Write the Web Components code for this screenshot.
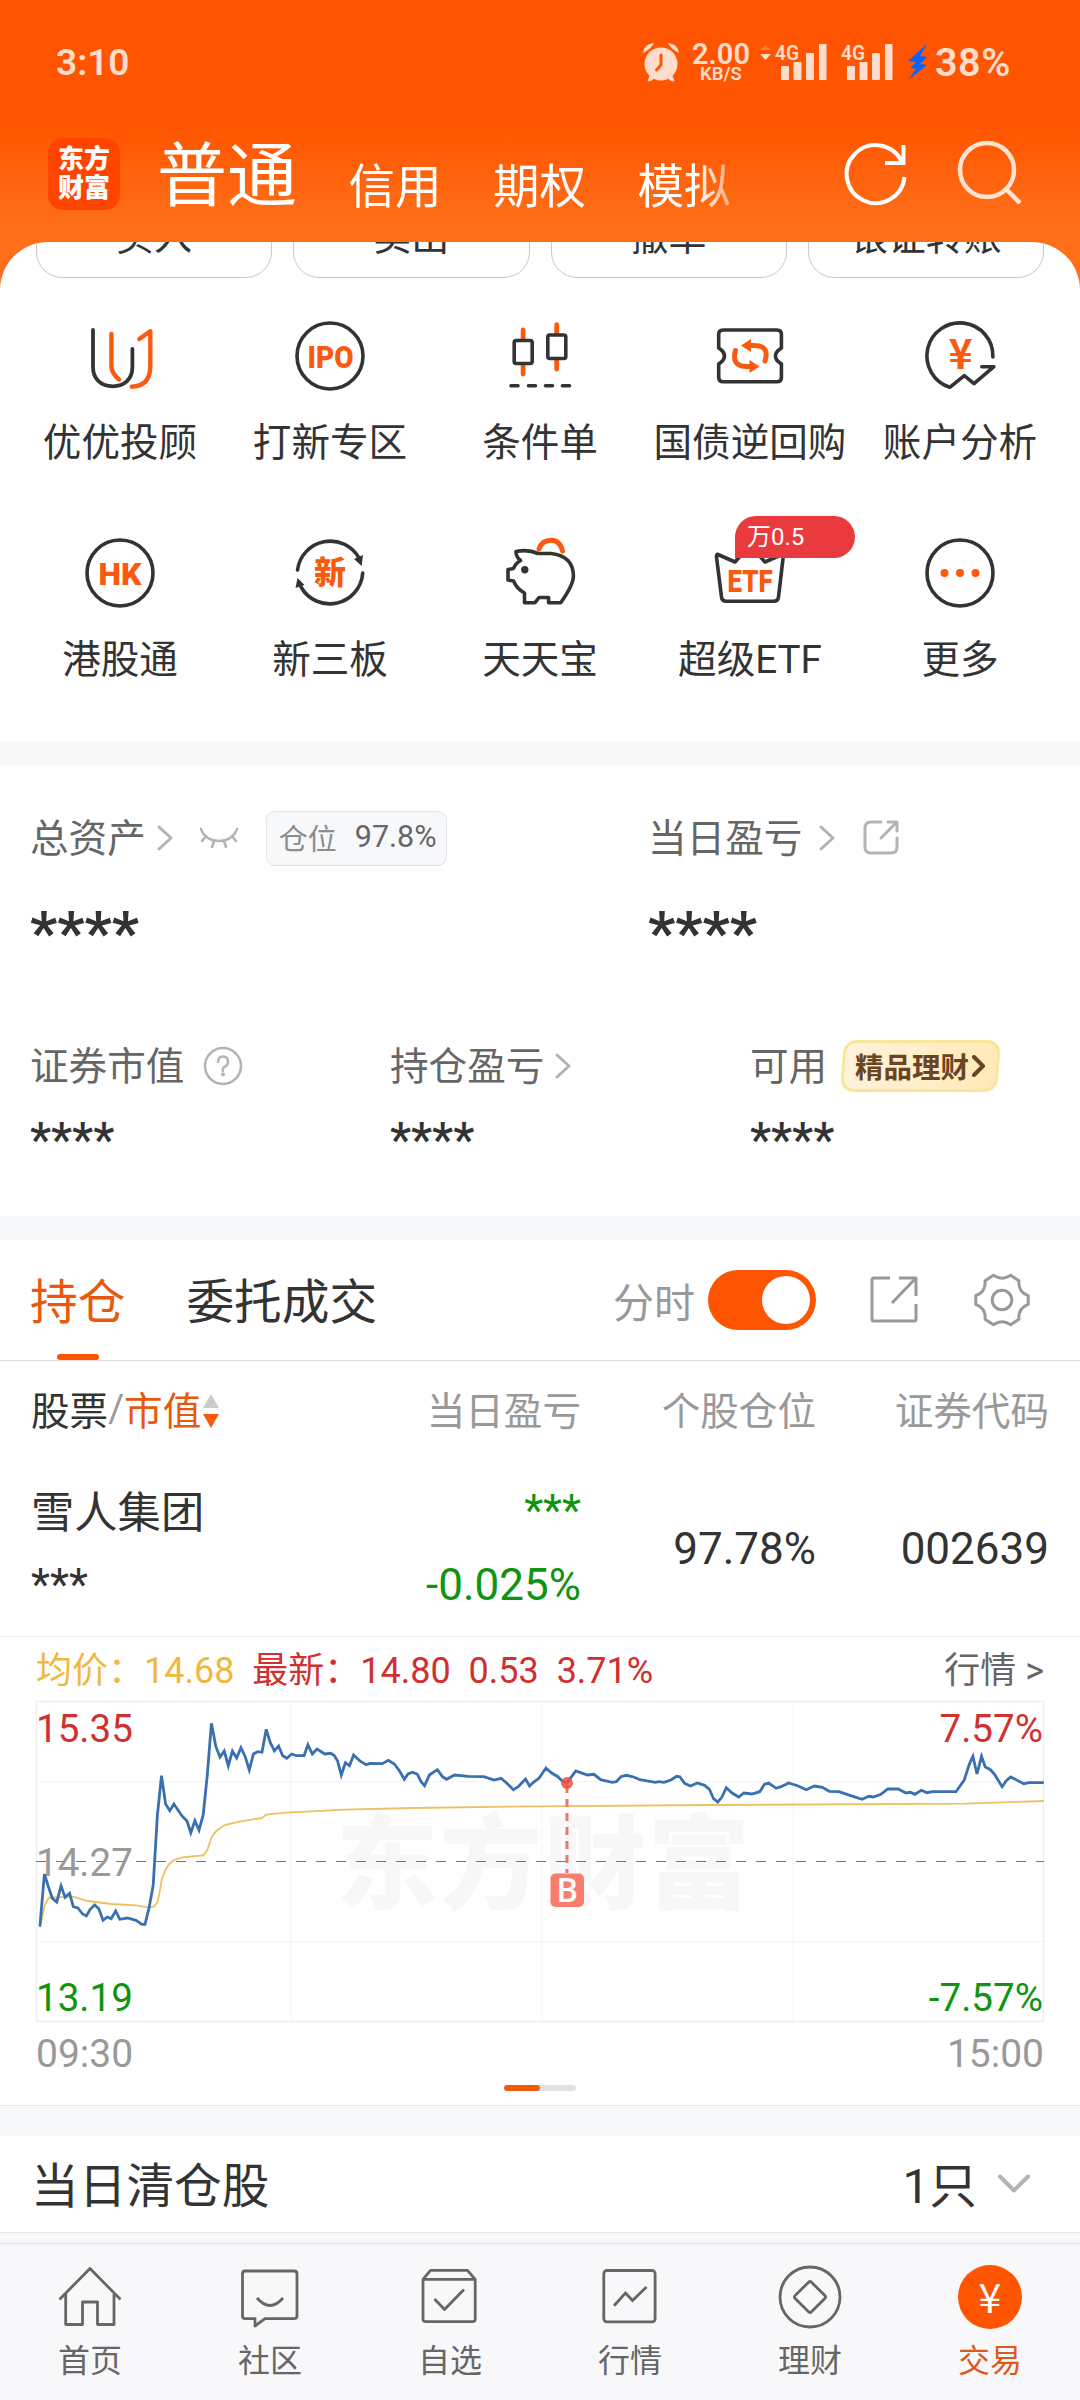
<!DOCTYPE html>
<html lang="zh-CN">
<head>
<meta charset="utf-8">
<title>交易</title>
<style>
  :root {
    --brand: #ff5500;
    --brand-text: #e8590c;
    --text: #333;
    --text-2: #666;
    --text-3: #999;
    --down: #109410;
    --up: #d03030;
    --gap-bg: #f7f8fa;
  }
  body {
    margin: 0;
    width: 1080px;
    height: 2400px;
    overflow: hidden;
    background: #fff;
    color: var(--text);
    font-family: Roboto, "Noto Sans CJK SC", sans-serif;
  }
</style>
</head>
<body>
<trade-page></trade-page>

<script>
// Base class: stamps the static css/html into an open shadow root
class BaseElement extends HTMLElement {
  constructor() {
    super();
    this.attachShadow({ mode: "open" });
  }

  connectedCallback() {
    this.shadowRoot.innerHTML = `<style>${this.constructor.css || ""}</style>${this.html()}`;
  }

  html() {
    return "<slot></slot>";
  }
}

// Icons, keyed by name: [width, height, markup]
const ICONS = {
  refresh: [68, 68, `<g fill="none" stroke="#fff" stroke-width="4"><path d="M59.500 21A29 29 0 1 0 62.500 37"/><path d="M61.500 5V23H43"/></g>`],
  search: [68, 68, `<g fill="none" stroke="#ffe3d0" stroke-width="4.500"><circle cx="31" cy="30" r="27"/><path d="M50 49L64 63"/></g>`],
  alarm: [38, 40, `<g fill="#ffdccb"><circle cx="19" cy="22" r="16.500"/><path d="M1 11Q2 2 12 1Q9 7 1 11ZM37 11Q36 2 26 1Q29 7 37 11Z"/><path d="M8 34l-2 5 4-1 2-3zM30 34l2 5-4-1-2-3z" stroke="#ffdccb"/></g><path d="M19 13v10l-4.500 5" fill="none" stroke="#ff5500" stroke-width="3" stroke-linecap="round"/>`],
  bolt: [21, 38, `<path d="M20 1L1 18l8 1-6 6 6 1-8 11 19-15-7-1 7-7-7-1z" fill="#0a63ff"/>`],
  chevron: [16, 26, `<path d="M2 2L14 13 2 24" fill="none" stroke="#b3b3b3" stroke-width="3" stroke-linecap="round" stroke-linejoin="round"/>`],
  chevronDown: [34, 20, `<path d="M3 2.500L17 16.500 31 2.500" fill="none" stroke="#b3b3b3" stroke-width="4" stroke-linecap="round" stroke-linejoin="round"/>`],
  eyeClosed: [40, 22, `<g fill="none" stroke="#b3b3b3" stroke-width="2.500" stroke-linecap="round"><path d="M2 2C7 18 33 18 38 2M7 9l-4 5M33 9l4 5M15 14l-2 6M25 14l2 6"/></g>`],
  share: [36, 36, `<g fill="none" stroke="#b3b3b3" stroke-width="3" stroke-linecap="round" stroke-linejoin="round"><path d="M18 2H8Q2 2 2 8V27Q2 33 8 33H28Q34 33 34 27V18M25 2H34V11M34 2L18 18"/></g>`],
  shareBig: [48, 48, `<g fill="none" stroke="#999" stroke-width="3" stroke-linejoin="round"><path d="M20 2H4Q2 2 2 4V43Q2 45 4 45H44Q46 45 46 43V28M29 2H46V20M45 3L22 27"/></g>`],
  help: [40, 40, `<circle cx="20" cy="20" r="18" fill="none" stroke="#b3b3b3" stroke-width="2.500"/><path d="M15 16Q15 10.500 20 10.500T25 16Q25 19 22 20.500T20 25" fill="none" stroke="#b3b3b3" stroke-width="2.500" stroke-linecap="round"/><circle cx="20" cy="28.500" r="2" fill="#b3b3b3"/>`],
  gear: [56, 56, `<g fill="none" stroke="#999" stroke-width="3" stroke-linejoin="round"><path d="M19.400 3.300Q28 9 36.600 3.300L44.900 8.700Q44 20 54.200 23.700V32.300Q44 36 44.900 47.300L36.600 52.700Q28 47 19.400 52.700L11.100 47.300Q12 36 1.800 32.300V23.700Q12 20 11.100 8.700Z"/><circle cx="28" cy="28" r="9.800"/></g>`],

  // Quick entries, 72x72
  advisor: [72, 72, `<g fill="none" stroke-width="3.800" stroke-linecap="round" stroke-linejoin="round"><path stroke="#333" d="M9 10V47C9 59 17 66.300 28.800 66.300S48.400 59 48.400 47V29"/><path stroke="#fa5a0f" stroke-width="4.400" d="M27.400 14V46Q27.400 53 35 59.500M55.300 19L66.300 11.300V46Q66.300 66 47.700 66.700"/></g>`],
  ipo: [72, 72, `<circle cx="36" cy="36" r="33" fill="none" stroke="#333" stroke-width="3.600"/><text x="13.500" y="47.500" font-size="32" font-weight="900" fill="#fa5a0f" textLength="46" lengthAdjust="spacingAndGlyphs">IPO</text>`],
  candles: [72, 72, `<g fill="none" stroke="#fa5a0f" stroke-width="4.800" stroke-linecap="round"><path d="M19.100 10V20M19.100 44V54M52.700 4.700V14M52.700 39V49"/></g><g fill="#fff" stroke="#333" stroke-width="3.600"><rect x="10.200" y="20.500" width="18" height="23" rx="2"/><rect x="43.800" y="15" width="18" height="23.500" rx="2"/></g><path d="M7 65.700h7M24.500 65.700h7M41.500 65.700h7M58.500 65.700h7" stroke="#333" stroke-width="3.600" stroke-linecap="round"/>`],
  repo: [72, 72, `<path d="M9 10H63Q67.400 10 67.400 14.500V28C65 30 61.500 31 61.500 36S65 42 67.400 44V57.500Q67.400 61.700 63 61.700H9Q4.700 61.700 4.700 57.500V44C7 42 10.500 41 10.500 36S7 30 4.700 28V14.500Q4.700 10 9 10Z" fill="none" stroke="#333" stroke-width="3.600"/><g fill="none" stroke="#fa5a0f" stroke-width="5" stroke-linecap="round"><path d="M51 41Q56 25.500 40 25.500H35M21.500 30.500Q17 46.500 33 46.500H37"/></g><path d="M27 25.500L37 19V32ZM45.500 46.500L35.500 40V53Z" fill="#fa5a0f"/>`],
  analysis: [72, 72, `<path d="M68.900 37A33 33 0 1 0 25.800 67.300L40.300 55.700 50 63.700 69.900 46.700H57.800" fill="none" stroke="#333" stroke-width="3.600" stroke-linecap="round" stroke-linejoin="round"/><text x="36.500" y="49" font-size="41" font-weight="700" font-family="'Noto Sans CJK SC', sans-serif" text-anchor="middle" fill="#fa5a0f">¥</text>`],
  hk: [72, 72, `<circle cx="36" cy="36" r="33" fill="none" stroke="#333" stroke-width="3.600"/><text x="14.500" y="47.500" font-size="32" font-weight="900" fill="#fa5a0f" textLength="43" lengthAdjust="spacingAndGlyphs">HK</text>`],
  neeq: [72, 72, `<g fill="none" stroke="#333" stroke-width="3.600" stroke-linecap="round"><path d="M3.500 33A33 33 0 0 1 65 21M68.700 36A33 33 0 0 1 7 50"/></g><path d="M67.700 29L60 22l9-4zM3.500 41l-2 10 9-3z" fill="#333"/><text x="36" y="47" font-size="32" font-weight="900" text-anchor="middle" fill="#fa5a0f">新</text>`],
  piggy: [72, 72, `<path d="M35 12Q38 3.300 47 3.300T58.500 14" fill="none" stroke="#fa5a0f" stroke-width="5" stroke-linecap="round"/><path d="M12 14.500Q24 12 34 16.500H47Q69.400 19 69.400 39 69.400 48 56.700 65.700H44.600V60.500H35L31 65.700H20.500V56Q13 52 9.500 44L4 43V32.500L9.500 31.500Q11 27 16.500 23.500 12 20 12 14.500Z" fill="#fff" stroke="#333" stroke-width="3.600" stroke-linejoin="round"/><circle cx="20.800" cy="32.700" r="3.700" fill="#333"/>`],
  etf: [72, 72, `<path d="M4 17.500L21 25 36 8 51 25 68 17.500Q69.500 17.500 69.200 20L64.500 60Q64 64.300 59.500 64.300H12.500Q8 64.300 7.500 60L2.500 20Q2.300 17 4 17.500Z" fill="none" stroke="#333" stroke-width="3.600" stroke-linejoin="round"/><text x="13.500" y="54.500" font-size="32" font-weight="900" fill="#fa5a0f" textLength="45" lengthAdjust="spacingAndGlyphs">ETF</text>`],
  more: [72, 72, `<circle cx="36" cy="36" r="33" fill="none" stroke="#333" stroke-width="3.600"/><g fill="#fa5a0f"><circle cx="20.500" cy="36" r="4"/><circle cx="36" cy="36" r="4"/><circle cx="51.500" cy="36" r="4"/></g>`],

  // Bottom tabs, 64x64
  home: [64, 64, `<path d="M1.500 34.500L32 3.500 62.500 34.500M7.700 29V59.500H24.500V37H39.500V59.500H56V29" fill="none" stroke="#666" stroke-width="2.800" stroke-linejoin="round"/>`],
  community: [64, 64, `<path d="M7 6H56Q59 6 59 9V51Q59 53.700 56 53.700H27L17 61V53.700H7Q4.500 53.700 4.500 51V9Q4.500 6 7 6ZM19 33Q32 48 45 33" fill="none" stroke="#666" stroke-width="2.800" stroke-linejoin="round"/>`],
  favorites: [64, 64, `<path d="M5 14.300L12.500 5.300H49.500L57.200 14.300V54Q57.200 56.700 54.500 56.700H7.700Q5 56.700 5 54ZM5 14.300H57.200M16.500 34L26.500 44.500 46 24.500" fill="none" stroke="#666" stroke-width="2.800" stroke-linejoin="round"/>`],
  quotes: [64, 64, `<rect x="5.800" y="5.500" width="51.300" height="51.300" rx="3" fill="none" stroke="#666" stroke-width="2.800"/><path d="M16 40.700L27.500 28 34.500 35.500 48.500 22" fill="none" stroke="#666" stroke-width="2.800"/>`],
  wealth: [64, 64, `<circle cx="32" cy="32" r="30" fill="none" stroke="#666" stroke-width="2.800"/><rect x="20.500" y="20.500" width="23" height="23" rx="2" transform="rotate(45 32 32)" fill="none" stroke="#666" stroke-width="2.800"/>`],
  trade: [64, 64, `<circle cx="32" cy="32" r="32" fill="#ff5500"/><text x="32" y="48" font-size="41" font-family="'Noto Sans CJK SC', sans-serif" text-anchor="middle" fill="#fff">¥</text>`],
};

class AppIcon extends BaseElement {
  static css = ":host { display: block; flex: none; } svg { display: block; overflow: visible; }";

  html() {
    const [w, h, body] = ICONS[this.getAttribute("name")];
    return `<svg width="${w}" height="${h}" viewBox="0 0 ${w} ${h}">${body}</svg>`;
  }
}
customElements.define("app-icon", AppIcon);

// System status bar
class StatusBar extends BaseElement {
  static css = `
    :host { display: flex; align-items: center; height: 124px; padding: 0 66px 0 56px; color: #ffdccb; font-weight: 600; }
    .time { flex: 1; font-size: 37px; }
    .speed { display: flex; flex-direction: column; align-items: center; width: 60px; margin-left: 11px; font-size: 29px; line-height: 24px; }
    .speed small { font-size: 18.500px; line-height: 17px; }
    .dir { margin: 0 4px 20px 9px; }
    .sig { margin-right: 13px; }
    .pct { width: 79px; margin-left: 7px; font-size: 39.500px; letter-spacing: 0.500px; white-space: nowrap; }
    svg { display: block; }
  `;

  signal() {
    return `<svg class="sig" width="53" height="38" viewBox="0 0 53 38" fill="#ffdccb">
      <text x="0" y="17" font-size="21" textLength="24" lengthAdjust="spacingAndGlyphs">4G</text>
      <rect x="6" y="23" width="8" height="14" rx="1"/><rect x="18.500" y="19" width="8" height="18" rx="1"/>
      <rect x="31" y="10" width="8" height="27" rx="1"/><rect x="44" y="1" width="7.500" height="36" rx="1"/>
    </svg>`;
  }

  html() {
    return `<span class="time">3:10</span>
      <app-icon name="alarm"></app-icon>
      <div class="speed"><span>2.00</span><small>KB/S</small></div>
      <svg class="dir" width="11" height="15" viewBox="0 0 11 15"><path d="M0 5L5.500 0 11 5z" fill="#ff7a3a"/><path d="M0 9L5.500 15 11 9z" fill="#ffdccb"/></svg>
      ${this.signal()}${this.signal()}
      <app-icon name="bolt"></app-icon>
      <span class="pct">38%</span>`;
  }
}
customElements.define("status-bar", StatusBar);

// Logo, account type tabs and header actions
class AccountHeader extends BaseElement {
  static css = `
    :host { display: flex; align-items: center; height: 100px; padding: 0 56px 18px 48px; color: #fff; }
    .logo { box-sizing: border-box; width: 72px; height: 72px; padding-top: 7px; border-radius: 15px; background: #ff4400;
      text-align: center; font-size: 26px; font-weight: 900; line-height: 29px; }
    nav { display: flex; align-items: center; gap: 51.500px; flex: 1; margin-left: 37px;
      -webkit-mask-image: linear-gradient(90deg, #000 540px, transparent 600px); mask-image: linear-gradient(90deg, #000 540px, transparent 600px); }
    span { padding-top: 25px; font-size: 46.500px; line-height: 56px; white-space: nowrap; }
    .on { padding: 6px 0 0; font-size: 70px; line-height: 80px; }
    .tools { display: flex; gap: 46px; }
  `;

  html() {
    return `<div class="logo">东方<br>财富</div>
      <nav><span class="on">普通</span><span>信用</span><span>期权</span><span>模拟</span></nav>
      <div class="tools"><app-icon name="refresh"></app-icon><app-icon name="search"></app-icon></div>`;
  }
}
customElements.define("account-header", AccountHeader);

class ActionButton extends BaseElement {
  static css = `
    :host { box-sizing: border-box; flex: 1; height: 80px; border: 1px solid #c8c8c8; border-radius: 26px;
      text-align: center; font-size: 38px; line-height: 77px; }
  `;
}
customElements.define("action-button", ActionButton);

class QuickEntry extends BaseElement {
  static css = `
    :host { display: flex; flex-direction: column; align-items: center; height: 146px; }
    .icon { position: relative; margin-bottom: 27px; }
    .label { font-size: 38.600px; line-height: 48px; white-space: nowrap; }
    .tag { position: absolute; left: 21px; top: -21px; box-sizing: border-box; width: 120px; height: 42px; padding-left: 12px;
      border-radius: 21px 21px 21px 0; background: #e93b3d; color: #fff; font-size: 24px; line-height: 42px; }
  `;

  html() {
    const tag = this.getAttribute("tag");
    return `<div class="icon"><app-icon name="${this.getAttribute("icon")}"></app-icon>${tag ? `<div class="tag">${tag}</div>` : ""}</div>
      <div class="label"><slot></slot></div>`;
  }
}
customElements.define("quick-entry", QuickEntry);

// One figure of the asset overview; extras go next to its label
class AssetItem extends BaseElement {
  static css = `
    :host { display: block; }
    .head { display: flex; align-items: center; height: 56px; color: var(--text-2); font-size: 38.600px; white-space: nowrap; }
    .head span { padding-bottom: 6px; }
    .value { margin-top: 18px; font-size: 47.500px; font-weight: 500; line-height: 56px; }
    :host([big]) .value { margin-top: 31px; font-size: 60px; font-weight: 700; line-height: 72px; }
  `;

  html() {
    return `<div class="head"><span>${this.getAttribute("label")}</span><slot></slot></div><div class="value">****</div>`;
  }
}
customElements.define("asset-item", AssetItem);

class AssetOverview extends BaseElement {
  static css = `
    :host { display: block; box-sizing: border-box; height: 450px; padding: 44px 30px 0; }
    .row { display: grid; }
    .top { grid-template-columns: 618px 1fr; height: 228px; }
    .bottom { grid-template-columns: 360px 360px 1fr; }
    .position { display: flex; align-items: center; box-sizing: border-box; width: 181px; height: 55px; margin-left: 27px; padding: 0 0 3px 12px;
      border: 1px solid #e2e3e6; border-radius: 9px; background: #f7f8fa; font-size: 29px; color: #8c8c8c; }
    .position b { margin-left: 18px; font-size: 30.500px; font-weight: 400; color: var(--text-2); }
    .promo { display: flex; align-items: center; box-sizing: border-box; width: 157px; height: 52px; margin-left: 15px; padding-left: 10px;
      border: 3px solid #f8e69c; border-radius: 13px; background: linear-gradient(100deg, #fff3dc, #ffe9b5); transform: skewX(-4deg);
      color: #6b4423; font-size: 28.500px; font-weight: 700; }
    .promo svg { margin-left: 3px; transform: skewX(4deg); }
    .promo span { transform: skewX(4deg); padding: 0 0 2px; }
  `;

  html() {
    return `<div class="row top">
        <asset-item big label="总资产">
          <app-icon name="chevron" style="margin-left: 11px"></app-icon>
          <app-icon name="eyeClosed" style="margin-left: 26px"></app-icon>
          <div class="position">仓位<b>97.8%</b></div>
        </asset-item>
        <asset-item big label="当日盈亏">
          <app-icon name="chevron" style="margin-left: 17px"></app-icon>
          <app-icon name="share" style="margin-left: 28px"></app-icon>
        </asset-item>
      </div>
      <div class="row bottom">
        <asset-item label="证券市值"><app-icon name="help" style="margin-left: 19px"></app-icon></asset-item>
        <asset-item label="持仓盈亏"><app-icon name="chevron" style="margin-left: 11px"></app-icon></asset-item>
        <asset-item label="可用">
          <div class="promo"><span>精品理财</span><svg width="14" height="22" viewBox="0 0 14 22"><path d="M2 2L11 11 2 20" fill="none" stroke="#6b4423" stroke-width="4" stroke-linecap="round" stroke-linejoin="round"/></svg></div>
        </asset-item>
      </div>`;
  }
}
customElements.define("asset-overview", AssetOverview);

class SectionGap extends BaseElement {
  static css = ":host { display: block; height: 24px; background: var(--gap-bg); }";
}
customElements.define("section-gap", SectionGap);

class ToggleSwitch extends BaseElement {
  static css = `
    :host { display: flex; justify-content: flex-end; box-sizing: border-box; width: 108px; height: 60px; padding: 6px; border-radius: 30px; background: var(--brand); }
    i { width: 48px; height: 48px; border-radius: 50%; background: #fff; }
  `;

  html() {
    return "<i></i>";
  }
}
customElements.define("toggle-switch", ToggleSwitch);

class HoldingTabs extends BaseElement {
  static css = `
    :host { display: flex; align-items: center; box-sizing: border-box; height: 121px; padding: 0 50px 0 30px; border-bottom: 1px solid #dcdcdc; font-size: 47.700px; }
    .tab { display: flex; flex-direction: column; align-items: center; justify-content: flex-end; height: 120px; line-height: 56px; }
    .tab::after { content: ""; width: 42px; height: 6px; margin-top: 23px; border-radius: 3px; }
    .on { color: var(--brand-text); margin-right: 61px; }
    .on::after { background: var(--brand); }
    .mode { margin-left: auto; margin-right: 13px; color: var(--text-3); font-size: 41px; }
  `;

  html() {
    return `<span class="tab on">持仓</span><span class="tab">委托成交</span>
      <span class="mode">分时</span><toggle-switch></toggle-switch>
      <app-icon name="shareBig" style="margin-left: 54px"></app-icon>
      <app-icon name="gear" style="margin-left: 56px"></app-icon>`;
  }
}
customElements.define("holding-tabs", HoldingTabs);

class HoldingTable extends BaseElement {
  static css = `
    :host { display: block; height: 276px; box-sizing: border-box; border-bottom: 1px solid #f0f0f0; }
    .row { display: grid; grid-template-columns: 300px 1fr 235px 233px; padding: 0 31px; align-items: center; text-align: right; }
    .row > :first-child { text-align: left; }
    .head { height: 94px; padding-bottom: 6px; font-size: 38.600px; color: var(--text-3); }
    .sort { display: flex; align-items: center; }
    .sort b { font-weight: 400; color: var(--text); }
    .sort em { font-style: normal; color: var(--brand-text); }
    .stock { height: 175px; font-size: 44px; }
    .cell { display: flex; flex-direction: column; }
    .name { font-size: 43.300px; line-height: 60px; margin-top: 2px; }
    .mask { line-height: 60px; margin-top: 11px; }
    .down { color: var(--down); margin-top: -4px; }
    .down .mask { margin: 0; line-height: 56px; }
    .down .rate { line-height: 52px; margin-top: 20px; }
  `;

  html() {
    return `<div class="row head">
        <div class="sort"><b>股票</b>/<em>市值</em>
          <svg width="18" height="36" viewBox="0 0 18 36" style="margin: 5px 0 0 1px"><path d="M1 15L9 1 17 15z" fill="#ccc"/><path d="M1 21L9 35 17 21z" fill="#fa5a0f"/></svg>
        </div>
        <span>当日盈亏</span><span>个股仓位</span><span>证券代码</span>
      </div>
      <div class="row stock">
        <div class="cell"><span class="name">雪人集团</span><span class="mask">***</span></div>
        <div class="cell down"><span class="mask">***</span><span class="rate">-0.025%</span></div>
        <span>97.78%</span><span>002639</span>
      </div>`;
  }
}
customElements.define("holding-table", HoldingTable);

const PRICE_LINE = "3.9,225.7 8.4,173 12.6,186.3 16.3,197.3 20.8,201 25,185 29.1,196.3 33.6,192.3 37.3,205.7 41.8,207 46.6,213 50.4,215 54.2,208.3 58.7,204 62.8,207.7 67,219.3 71.4,216 75.2,217.7 79.7,210 83.8,218.3 91.4,217 100,219.3 105.9,223.3 109,223.3 113.1,206.7 117.2,184 121.4,114 125.5,74.7 129.6,103 133.8,109.7 137.9,103 145.8,114.7 151,120 154.8,131.7 158.9,119.7 163,129 167.2,114 171.3,74 175.4,22.3 179.9,45.7 184,56 188.2,50 192.3,64.7 196.4,50 200.6,57 205,46.7 209.2,55.7 213.3,69 217.4,53 221.6,50.7 226,51.3 230.2,28.3 234.3,41.7 238.4,49.7 242.6,45 246.7,54.7 250.8,57.3 255.7,53 260.1,54.7 268.1,54.7 271.9,43.7 276.3,53 281.1,48 288.7,53 294.6,52.3 298,54.3 301.5,59.7 305.3,74 309.4,61.7 313.5,64.7 317.6,54 323.9,60 330,63.7 334.2,62.3 346.2,62.7 352.4,59.3 358.3,63 363.4,69.7 368.3,78.3 372,73 376.5,71.3 381.4,73.3 385.1,80.7 388.6,84.7 393.4,74 401.3,68.7 406.5,75.7 410.6,78.3 418.5,74 432.3,75.3 447.8,75.7 458.1,79 465,77.3 470.9,82.3 477.4,88.7 482.3,85.7 489.5,78 493.6,85 497.7,81 502.9,77.3 504,75.7 509.9,67 516,72.3 521.9,75.7 526.4,80.3 530.9,81.7 535,76.3 539.8,70 551.5,74 558,73.3 564.6,78.7 576.3,81.3 580.4,80.7 584.9,75.7 590.1,74.3 597.7,76 603.9,78.7 619.4,81.3 622.8,80.7 628,81.3 634.9,79 640.7,75.3 643.8,75.7 648.6,82.3 654.5,85 661.4,82 668.6,84.3 673.4,88.3 677.6,97.7 681.7,101 685.8,96.3 690.3,86.7 696.1,92 702.7,96 707.9,92 715.8,93 723.7,90.7 728.5,83.3 732.7,82 740.2,87.3 745,85.7 752.6,82 761.6,84.7 770.2,88.7 778.4,85 786.4,86.3 793.3,90.3 802.9,90.7 813.9,94.3 826,98.3 832.9,95.3 837.3,96 844.9,93.3 851.8,88 862.1,88 870,92 874.5,91.3 878.7,93.3 885.5,89.3 891,91.7 896.6,90.7 920,90.7 928.2,79 933.4,63 936.9,55.3 941,73 945.5,55.3 949.3,66 954.4,68.7 958.5,73.3 966.1,85.7 970.3,79.7 974.7,76 979.2,78.3 987.8,82.7 993,81.7 1007.8,81.7";
const AVG_LINE = "3.9,225.7 8.8,204 12.9,196.7 37,195.7 51.8,200 75.9,203 100,204.3 113.1,206.7 117.9,205.7 121.4,201.3 123.4,192.3 125.8,178.3 129.3,169 133.4,162.7 137.9,159 146.5,156.3 167.2,154.3 171.3,149 175.8,135.7 180.3,130 188.5,124 205,120.3 226,117 230.2,113.7 249.8,111.7 270.5,110.7 308.4,108.7 377,107 503.6,105.3 676,104 929.3,102.7 1007.8,100";

// Intraday chart of the selected holding
class IntradayChart extends BaseElement {
  static css = `
    :host { display: block; box-sizing: border-box; height: 469px; padding: 0 36px; border-bottom: 1px solid #e6e7ea; }
    .info { display: flex; box-sizing: border-box; height: 64px; padding-bottom: 4px; align-items: center; white-space: pre; font-size: 36px; color: var(--up); }
    .avg { color: #f0b840; }
    .link { margin-left: auto; color: var(--text-2); }
    .plot { display: block; overflow: visible; font-size: 38.600px; }
    .time { display: flex; justify-content: space-between; box-sizing: border-box; padding: 9px 0 0; height: 63px; line-height: 46px; font-size: 39px; color: var(--text-3); }
    .pager { display: flex; width: 72px; height: 6px; margin: 0 auto; border-radius: 3px; background: #e2e2e2; }
    .pager i { width: 36px; border-radius: 3px; background: #f05a0c; }
  `;

  html() {
    return `<div class="info"><span class="avg">均价：14.68  </span><span>最新：14.80  0.53  3.71%</span><span class="link">行情 &gt;</span></div>
      <svg class="plot" width="1008" height="321" viewBox="0 0 1008 321">
        <text x="300" y="200" font-size="102" font-weight="900" fill="#f7f7f7" textLength="414">东方财富</text>
        <rect x="0.500" y="0.500" width="1007" height="320" fill="none" stroke="#efeff0" stroke-width="1.500"/>
        <path d="M255 0V321M506 0V321M757 0V321M0 80.500H1008M0 240.500H1008" stroke="#e9e9eb" stroke-dasharray="1 1"/>
        <path d="M0 160.500H1008" stroke="#777" stroke-dasharray="10 10"/>
        <text x="0" y="175" fill="#999">14.27</text>
        <polyline points="${AVG_LINE}" fill="none" stroke="#ecc161" stroke-width="1.800"/>
        <polyline points="${PRICE_LINE}" fill="none" stroke="#3a70b0" stroke-width="2.800"/>
        <path d="M531 84V172" stroke="#e8796d" stroke-width="3" stroke-dasharray="8 6"/>
        <circle cx="531" cy="82" r="6" fill="#f0503f" fill-opacity="0.850"/>
        <rect x="514.500" y="172.500" width="33.500" height="33.500" rx="5" fill="#f97d6d"/>
        <text x="531.500" y="201" font-size="33" font-weight="500" text-anchor="middle" fill="#fff">B</text>
        <text x="0" y="41" fill="#d03030">15.35</text>
        <text x="0" y="310" fill="#109410">13.19</text>
        <text x="1007" y="41" text-anchor="end" fill="#d03030">7.57%</text>
        <text x="1007" y="310" text-anchor="end" fill="#109410">-7.57%</text>
      </svg>
      <div class="time"><span>09:30</span><span>15:00</span></div>
      <div class="pager"><i></i></div>`;
  }
}
customElements.define("intraday-chart", IntradayChart);

class ClearedStocks extends BaseElement {
  static css = `
    :host { display: flex; align-items: center; box-sizing: border-box; height: 97px; padding: 0 49px 0 31px; border-bottom: 1px solid #e8e9eb; font-size: 47.700px; }
    span { padding-bottom: 4px; }
    .count { margin-left: auto; margin-right: 20px; }
  `;

  html() {
    return `<span>当日清仓股</span><span class="count">1只</span><app-icon name="chevronDown"></app-icon>`;
  }
}
customElements.define("cleared-stocks", ClearedStocks);

class BottomNav extends BaseElement {
  static css = `
    :host { display: grid; grid-template-columns: repeat(6, 1fr); box-sizing: border-box; height: 157px; padding-top: 21px; border-top: 1px solid #dfe0e3; background: #f8f8fb; }
    div { display: flex; flex-direction: column; align-items: center; gap: 12px; color: var(--text-2); font-size: 32px; line-height: 40px; }
    .on { color: #dd5a1c; }
  `;

  html() {
    const tabs = [["home", "首页"], ["community", "社区"], ["favorites", "自选"], ["quotes", "行情"], ["wealth", "理财"], ["trade", "交易"]];
    return tabs.map(([icon, label]) =>
      `<div class="${icon === "trade" ? "on" : ""}"><app-icon name="${icon}"></app-icon><span>${label}</span></div>`).join("");
  }
}
customElements.define("bottom-nav", BottomNav);

class TradePage extends BaseElement {
  static css = `
    :host { display: flex; flex-direction: column; height: 2400px; }
    header { background: linear-gradient(#ff5500 125px, #ff6f19 225px); }
    .back { background: #ff6f19; }
    .sheet { height: 500px; overflow: hidden; border-radius: 48px 48px 0 0; background: #fff; }
    .actions { display: flex; gap: 21px; margin-top: -44px; padding: 0 36px; }
    .entries { display: grid; grid-template-columns: repeat(5, 1fr); row-gap: 71px; padding: 42px 15px 0; }
    bottom-nav { margin-top: auto; }
  `;

  html() {
    return `<header><status-bar></status-bar><account-header></account-header></header>
      <div class="back"><div class="sheet">
        <div class="actions">
          <action-button>买入</action-button><action-button>卖出</action-button>
          <action-button>撤单</action-button><action-button>银证转账</action-button>
        </div>
        <div class="entries">
          <quick-entry icon="advisor">优优投顾</quick-entry>
          <quick-entry icon="ipo">打新专区</quick-entry>
          <quick-entry icon="candles">条件单</quick-entry>
          <quick-entry icon="repo">国债逆回购</quick-entry>
          <quick-entry icon="analysis">账户分析</quick-entry>
          <quick-entry icon="hk">港股通</quick-entry>
          <quick-entry icon="neeq">新三板</quick-entry>
          <quick-entry icon="piggy">天天宝</quick-entry>
          <quick-entry icon="etf" tag="万0.5">超级ETF</quick-entry>
          <quick-entry icon="more">更多</quick-entry>
        </div>
      </div></div>
      <section-gap></section-gap>
      <asset-overview></asset-overview>
      <section-gap></section-gap>
      <holding-tabs></holding-tabs>
      <holding-table></holding-table>
      <intraday-chart></intraday-chart>
      <section-gap style="height: 30px"></section-gap>
      <cleared-stocks></cleared-stocks>
      <section-gap style="height: 10px"></section-gap>
      <bottom-nav></bottom-nav>`;
  }
}
customElements.define("trade-page", TradePage);
</script>
</body>
</html>
